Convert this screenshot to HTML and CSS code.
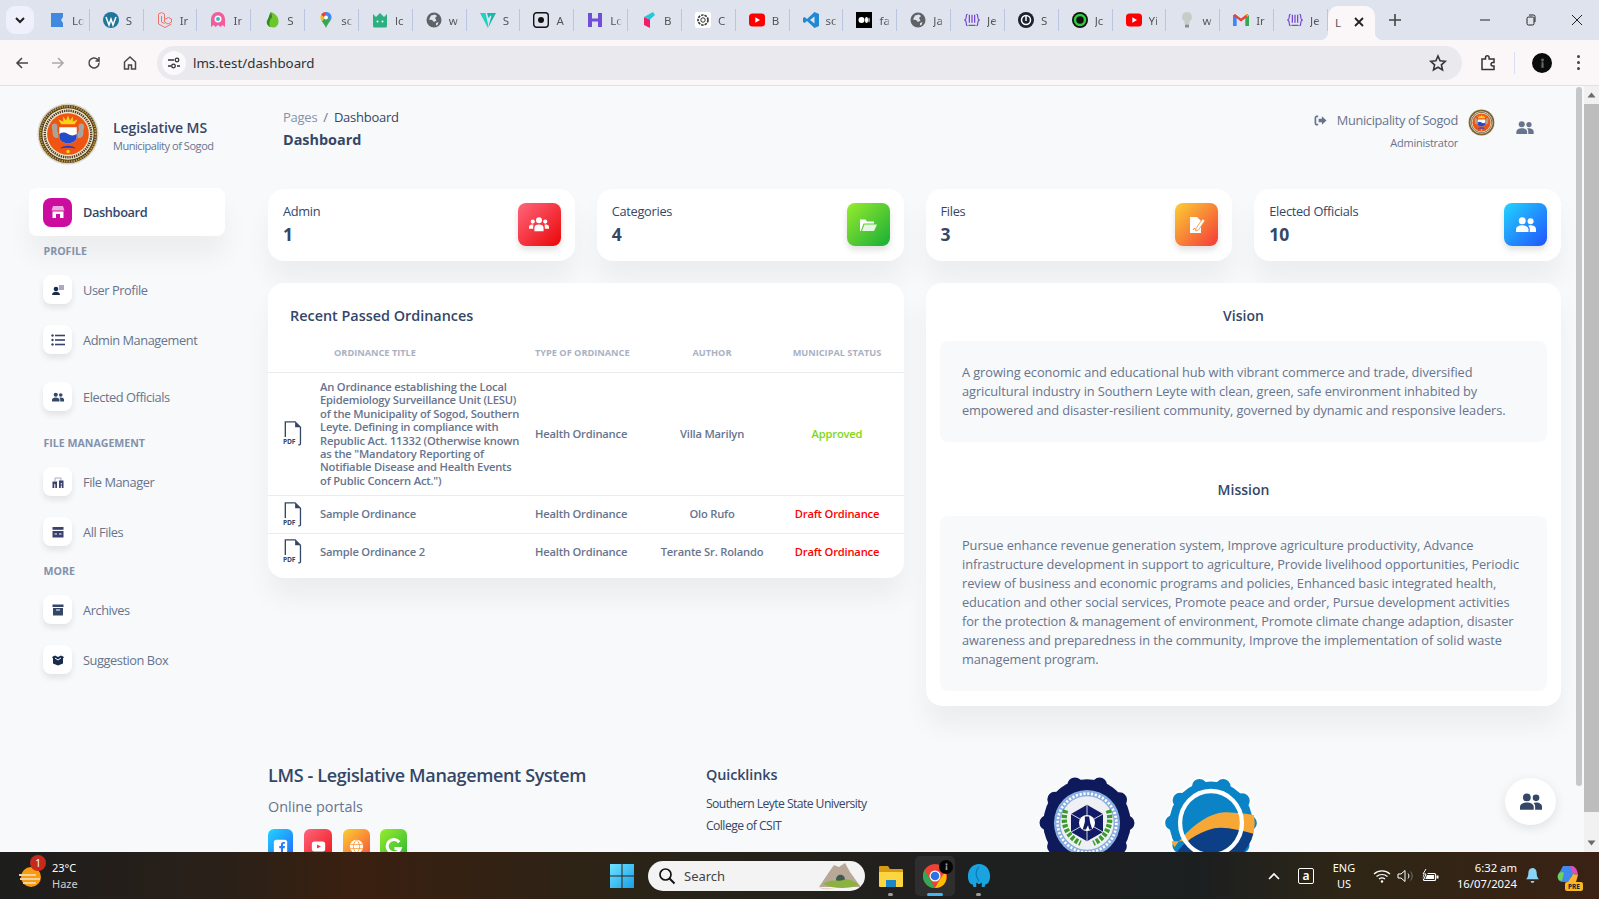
FILE: index.html
```html
<!DOCTYPE html>
<html lang="en">
<head>
<meta charset="utf-8">
<title>LMS Dashboard</title>
<link rel="stylesheet" href="styles.css">
</head>
<body>
<svg class="defs" aria-hidden="true">
  <defs><clipPath id="lgclip"><circle cx="45" cy="45" r="41"/></clipPath></defs>
  <symbol id="i-users3" viewBox="0 0 24 20"><circle cx="12" cy="5" r="3.6"/><circle cx="4.5" cy="6.5" r="2.5"/><circle cx="19.5" cy="6.5" r="2.5"/><path d="M6.5 18v-4c0-2.600 2-4 5.500-4s5.500 1.400 5.500 4v4z"/><path d="M0 15v-2c0-1.800 1.500-3 3.500-3 .8 0 1.300.1 1.900.4C5.200 11.200 5 12.500 5 14v1zM24 15v-2c0-1.800-1.500-3-3.500-3-.8 0-1.300.1-1.900.4.200.8.400 2.100.400 3.600v1z"/></symbol>
  <symbol id="i-users2" viewBox="0 0 24 18"><circle cx="7.500" cy="4.500" r="4.200"/><circle cx="17.500" cy="5" r="3.600"/><path d="M0 18v-3c0-3 3-5 7.500-5s7.500 2 7.500 5v3z"/><path d="M16.500 18v-3.500c0-1.700-.7-3-1.800-4 .9-.3 1.800-.5 2.900-.5 3.800 0 6.400 1.800 6.400 4.500V18z"/></symbol>
  <symbol id="i-seal" viewBox="0 0 64 64">
    <circle cx="32" cy="32" r="31.500" fill="#d9d5c5"/><circle cx="32" cy="32" r="30" fill="#4a3820"/>
    <circle cx="32" cy="32" r="28.500" fill="none" stroke="#c09a3c" stroke-width="2.200" stroke-dasharray="1.500 1"/>
    <circle cx="32" cy="32" r="26.500" fill="#f0e7c8"/>
    <circle cx="32" cy="32" r="24" fill="none" stroke="#4a3a28" stroke-width="2.500" stroke-dasharray="1.400 .9"/>
    <circle cx="32" cy="32" r="21.500" fill="#ef5412"/>
    <path d="M32 13l2 5 3-4 0 5 5-2-3 5h-14l-3-5 5 2 0-5 3 4z" fill="#f7d417"/>
    <path d="M23 25h18v10c0 4-4 6-9 7-5-1-9-3-9-7z" fill="#fff"/>
    <path d="M23 32c3-2 6-2 9 0s6 2 9 0v3c0 4-4 6-9 7-5-1-9-3-9-7z" fill="#2449c9"/>
    <path d="M24 47c2-4 14-4 16 0-3-1-13-1-16 0z" fill="#1a3fd0"/>
    <path d="M16 22c3-2 6 0 5 4-1 3 2 5 1 10-3 1-6-1-6-5 1-3-2-5 0-9zM48 22c-3-2-6 0-5 4 1 3-2 5-1 10 3 1 6-1 6-5-1-3 2-5 0-9z" fill="#a9a49b"/>
    <circle cx="32" cy="50" r="1.800" fill="#f7d417"/>
  </symbol>
  <symbol id="i-globe" viewBox="0 0 16 16"><circle cx="8" cy="8" r="7.500" fill="#5f6368"/><path d="M5 3.500l4-1 2 1.500-2 2 1.500 2.500L8 10 6 8 3 7.500zM10 11l2.500-1-1 3-1.500 .5z" fill="#dfe3ee"/></symbol>
  <symbol id="i-brack" viewBox="0 0 18 16"><path d="M4 1.500C2.500 1.500 2.500 3 2.500 4.500S2 7.500 .8 8c1.200.5 1.700 2 1.700 3.500s0 3 1.500 3M14 1.500c1.500 0 1.500 1.500 1.500 3s.5 3 1.700 3.500c-1.200.5-1.700 2-1.700 3.500s0 3-1.500 3" fill="none" stroke="#6d3bd2" stroke-width="1.200"/><path d="M6 2v9M9 2v9M12 2v9" stroke="#6d3bd2" stroke-width="1.300"/><path d="M5 14h8" stroke="#555" stroke-width="1.200"/></symbol>
  <symbol id="i-yt" viewBox="0 0 16 16"><rect y="1.500" width="16" height="13" rx="3.500" fill="#f00"/><path d="M6.300 5.200L11 8l-4.700 2.800z" fill="#fff"/></symbol>
  <symbol id="i-pdfdoc" viewBox="0 0 22 28"><path d="M3.500 18V1h11l6 6v18.500c0 .8-.5 1.300-1.300 1.300H18" fill="none" stroke="#344767" stroke-width="1.500"/><path d="M14.500 1v6h6" fill="#344767"/></symbol>
</svg>

<div class="tabstrip">
  <div class="tabsearch"><svg viewBox="0 0 12 12" class="ic12"><path d="M2 4l4 4 4-4" fill="none" stroke="#1f1f1f" stroke-width="2"/></svg></div>
  <div class="tabs">
    <div class="tab"><svg class="fav" viewBox="0 0 16 16"><path d="M2 1h12v4l-2 3 2 3v4H2z" fill="#3f8ae0"/></svg><span class="tt">Lo</span></div>
    <div class="tab"><svg class="fav" viewBox="0 0 16 16"><circle cx="8" cy="8" r="8" fill="#21759b"/><path d="M3 5l3 8 2-6 2 6 3-8" fill="none" stroke="#fff" stroke-width="1.500"/></svg><span class="tt">S</span></div>
    <div class="tab"><svg class="fav" viewBox="0 0 16 16"><path d="M1.500 2l3-1.500 3 1.500v8l3.500 2 3.500-2V7l-3-1.500L8 7M1.500 2v10L8 15.500l6.500-3.500M4.500 4v6l3 1.500" fill="none" stroke="#f0736a" stroke-width="1"/></svg><span class="tt">Ir</span></div>
    <div class="tab"><svg class="fav" viewBox="0 0 16 16"><path d="M1 15V7a7 7 0 0 1 14 0v8l-2.500-2-2 2-2.500-2-2.500 2-2-2z" fill="#f25c9b"/><circle cx="8" cy="7" r="3.500" fill="#fff"/><circle cx="8" cy="7" r="2" fill="#3bb6d6"/></svg><span class="tt">Ir</span></div>
    <div class="tab"><svg class="fav" viewBox="0 0 16 16"><path d="M7 0c3 1 8 4 7.500 10S9 16 6.500 15 1 11 3.500 8 5 3 7 0z" fill="#6cc72d"/><path d="M7 0c-2 3-2 5-3.500 8S4 14.500 6.500 15C4 12 6 8 7.500 6S7 2 7 0z" fill="#2e8b22"/></svg><span class="tt">S</span></div>
    <div class="tab"><svg class="fav" viewBox="0 0 16 16"><path d="M8 0c3 0 5.500 2.200 5.500 5.500 0 1-.3 1.800-.7 2.500L6 4.500 8 0z" fill="#4285f4"/><path d="M8 0a5.500 5.500 0 0 0-5 3l4 3z" fill="#ea4335"/><path d="M3 3c-.4.800-.5 1.600-.5 2.500 0 1.300.5 2.500 1.300 3.800L7 6z" fill="#fbbc04"/><path d="M3.800 9.300C5 11.300 7 13 8 16c1-3.200 3.400-5.500 4.800-8L9 5 7 6z" fill="#34a853"/><circle cx="8" cy="5.500" r="1.900" fill="#fff"/></svg><span class="tt">sc</span></div>
    <div class="tab"><svg class="fav" viewBox="0 0 16 16"><path d="M1 2l3 3 4-4 4 4 3-3v12a1.500 1.500 0 0 1-1.500 1.500h-11A1.500 1.500 0 0 1 1 14z" fill="#2bb07f"/><circle cx="5.500" cy="9.500" r="1" fill="#fff"/><circle cx="10.500" cy="9.500" r="1" fill="#fff"/></svg><span class="tt">lc</span></div>
    <div class="tab"><svg class="fav"><use href="#i-globe"/></svg><span class="tt">w</span></div>
    <div class="tab"><svg class="fav" viewBox="0 0 16 16"><path d="M0 1h5.500L8 12 8 16z" fill="#1fd1c0"/><path d="M16 1H7l1.500 5 2-2.500 1 .3L8 16z" fill="#15b8ab"/></svg><span class="tt">S</span></div>
    <div class="tab"><svg class="fav" viewBox="0 0 16 16"><rect x=".7" y=".7" width="14.600" height="14.600" rx="3" fill="#dfe3ee" stroke="#111" stroke-width="1.400"/><circle cx="8" cy="8" r="3" fill="#111"/></svg><span class="tt">A</span></div>
    <div class="tab"><svg class="fav" viewBox="0 0 16 16"><path d="M1 1h4v5.500h6V1h4v14h-4V9.500H5V15H1z" fill="#6f4fd8"/></svg><span class="tt">Lo</span></div>
    <div class="tab"><svg class="fav" viewBox="0 0 16 16"><path d="M3 5l6 2.500V16l-6-3z" fill="#f01d6b"/><path d="M3 5L12 0l2 3-5 4.500z" fill="#27c6d8"/></svg><span class="tt">B</span></div>
    <div class="tab"><svg class="fav" viewBox="0 0 16 16"><rect width="16" height="16" rx="2" fill="#fff"/><circle cx="8" cy="8" r="5" fill="none" stroke="#333" stroke-width="1.600" stroke-dasharray="2.500 1"/><circle cx="8" cy="8" r="2.200" fill="none" stroke="#333"/></svg><span class="tt">C</span></div>
    <div class="tab"><svg class="fav"><use href="#i-yt"/></svg><span class="tt">B</span></div>
    <div class="tab"><svg class="fav" viewBox="0 0 16 16"><path d="M11.500 0L16 2v12l-4.500 2L4 9l-2.500 2L0 10V6l1.500-1L4 7zM11.500 4.500L7 8l4.500 3.500z" fill="#1f8ad2"/></svg><span class="tt">sc</span></div>
    <div class="tab"><svg class="fav" viewBox="0 0 16 16"><rect width="16" height="16" fill="#000"/><circle cx="5.500" cy="8" r="3" fill="#fff"/><ellipse cx="10.500" cy="8" rx="1.500" ry="3" fill="#fff"/><ellipse cx="13" cy="8" rx=".6" ry="2.600" fill="#fff"/></svg><span class="tt">fa</span></div>
    <div class="tab"><svg class="fav"><use href="#i-globe"/></svg><span class="tt">Ja</span></div>
    <div class="tab"><svg class="fav"><use href="#i-brack"/></svg><span class="tt">Je</span></div>
    <div class="tab"><svg class="fav" viewBox="0 0 16 16"><circle cx="8" cy="8" r="8" fill="#1c2230"/><circle cx="8" cy="8" r="4.500" fill="none" stroke="#fff" stroke-width="1.500"/><path d="M8 4v5" stroke="#fff" stroke-width="1.500"/></svg><span class="tt">S</span></div>
    <div class="tab"><svg class="fav" viewBox="0 0 16 16"><circle cx="8" cy="8" r="8" fill="#111"/><circle cx="8" cy="8" r="5" fill="none" stroke="#2ecc40" stroke-width="2.500"/></svg><span class="tt">Jc</span></div>
    <div class="tab"><svg class="fav"><use href="#i-yt"/></svg><span class="tt">Yi</span></div>
    <div class="tab"><svg class="fav" viewBox="0 0 16 16"><path d="M8 0a5 5 0 0 1 2.500 9.300V12h-5V9.300A5 5 0 0 1 8 0z" fill="#c8ccc8"/><rect x="6" y="12.500" width="4" height="3" fill="#8a8f8a"/></svg><span class="tt">w</span></div>
    <div class="tab"><svg class="fav" viewBox="0 0 16 16"><path d="M0 14V3.500l2 -1 1.700 1V14z" fill="#4285f4"/><path d="M12.300 14V3.500l2-1 1.700 1V14z" fill="#34a853"/><path d="M0 3.500L8 9.500l8-6-2-1.500L8 6.500 2 2z" fill="#ea4335"/><path d="M13 2l3 1.500L14 5z" fill="#fbbc04"/></svg><span class="tt">Ir</span></div>
    <div class="tab"><svg class="fav"><use href="#i-brack"/></svg><span class="tt">Je</span></div>
  </div>
  <div class="tab-active"><span class="tt at">L</span><svg class="ic12" viewBox="0 0 12 12"><path d="M2 2l8 8M10 2l-8 8" stroke="#222" stroke-width="1.800"/></svg></div>
  <svg class="plus" viewBox="0 0 14 14"><path d="M7 1v12M1 7h12" stroke="#444" stroke-width="1.600"/></svg>
  <div class="winctl">
    <svg class="ic12" viewBox="0 0 12 12"><path d="M1 6h10" stroke="#222" stroke-width="1"/></svg>
    <svg class="ic12" viewBox="0 0 12 12"><rect x="2" y="3" width="7" height="8" rx="1.500" fill="none" stroke="#222"/><path d="M4 1h4.500A1.500 1.500 0 0 1 10 2.500V8" fill="none" stroke="#222"/></svg>
    <svg class="ic12" viewBox="0 0 12 12"><path d="M1 1l10 10M11 1L1 11" stroke="#222"/></svg>
  </div>
</div>

<div class="toolbar">
  <div class="navbtns">
    <svg class="tb" viewBox="0 0 16 16"><path d="M14 8H3M8 3L3 8l5 5" fill="none" stroke="#474747" stroke-width="1.600"/></svg>
    <svg class="tb" viewBox="0 0 16 16"><path d="M2 8h11M8 3l5 5-5 5" fill="none" stroke="#a9a9ab" stroke-width="1.600"/></svg>
    <svg class="tb" viewBox="0 0 16 16"><path d="M13 8a5 5 0 1 1-1.500-3.600L13 6V2M13 6H9.500" fill="none" stroke="#474747" stroke-width="1.500"/></svg>
    <svg class="tb" viewBox="0 0 16 16"><path d="M2.500 14V7L8 2l5.500 5v7h-4v-4h-3v4z" fill="none" stroke="#474747" stroke-width="1.500"/></svg>
  </div>
  <div class="omnibox">
    <span class="tune"><svg class="ic14" viewBox="0 0 14 14"><path d="M1 4h6M1 10h3M10 10h3" stroke="#333" stroke-width="1.400"/><circle cx="10" cy="4" r="1.800" fill="none" stroke="#333" stroke-width="1.300"/><circle cx="6.500" cy="10" r="1.800" fill="none" stroke="#333" stroke-width="1.300"/></svg></span>
    <span class="url">lms.test/dashboard</span>
    <svg class="star" viewBox="0 0 18 18"><path d="M9 2l2.100 4.800 5.200.5-3.900 3.500 1.100 5.100L9 13.200l-4.500 2.700 1.100-5.100L1.700 7.300l5.200-.5z" fill="none" stroke="#333" stroke-width="1.600"/></svg>
  </div>
  <div class="tbright">
    <svg class="tb" viewBox="0 0 18 18"><path d="M3 5h3.500V3.500a1.800 1.800 0 0 1 3.600 0V5H15v3.500h-1.200a1.700 1.700 0 0 0 0 3.500H15v3.500H3z" fill="none" stroke="#333" stroke-width="1.500"/></svg>
    <span class="tbdiv"></span>
    <span class="avatar"><svg viewBox="0 0 8 12" class="ava"><circle cx="4" cy="2.500" r="1.700" fill="#5a6670"/><path d="M3 4.500h2l.5 7h-3z" fill="#5a6670"/></svg></span>
    <span class="kebab"><i></i><i></i><i></i></span>
  </div>
</div>

<div class="page">
  <div class="content">
    <aside class="sidebar">
      <div class="brand">
        <svg class="seal"><use href="#i-seal"/></svg>
        <div class="brand-txt"><div class="brand-t">Legislative MS</div><div class="brand-s">Municipality of Sogod</div></div>
      </div>
      <div class="nav-active">
        <span class="nav-ic-a"><svg class="ic14" viewBox="0 0 14 14" fill="#fff"><path d="M2 1h10l1.500 4.500h-13z" opacity=".65"/><path d="M1.500 6.500h11V13H9V9H5v4H1.500z"/></svg></span>
        <span>Dashboard</span>
      </div>
      <div class="nav-label l-profile">PROFILE</div>
      <div class="nav-item ni-first"><span class="nav-ic"><svg class="ic14" viewBox="0 0 14 14"><circle cx="5" cy="6" r="2.300" fill="#172b4d"/><path d="M1 12c0-2.500 2-3.300 4-3.300s4 .8 4 3.300z" fill="#172b4d"/><rect x="8" y="2" width="5" height="5" fill="#a9a8c6"/></svg></span><span>User Profile</span></div>
      <div class="nav-item ni-gap8"><span class="nav-ic"><svg class="ic14" viewBox="0 0 14 14" fill="#3a416f"><circle cx="1.500" cy="2.500" r="1.200"/><circle cx="1.500" cy="7" r="1.200"/><circle cx="1.500" cy="11.500" r="1.200"/><rect x="4" y="1.700" width="10" height="1.600"/><rect x="4" y="6.200" width="10" height="1.600"/><rect x="4" y="10.700" width="10" height="1.600"/></svg></span><span>Admin Management</span></div>
      <div class="nav-item"><span class="nav-ic"><svg class="ic12" fill="#344767"><use href="#i-users2"/></svg></span><span>Elected Officials</span></div>
      <div class="nav-label l-file">FILE MANAGEMENT</div>
      <div class="nav-item ni-first"><span class="nav-ic"><svg class="ic14" viewBox="0 0 14 14"><path d="M4 6V3h6v3" fill="none" stroke="#a9a8c6"/><path d="M1.500 6.500H6V13H1.500zM8 5.500h4.500V13H8z" fill="#3a416f"/><path d="M3.300 9h1v4h-1zM9.800 8h1v1.500h-1zM9.800 10.500h1V13h-1z" fill="#fff"/></svg></span><span>File Manager</span></div>
      <div class="nav-item ni-tight"><span class="nav-ic"><svg class="ic14" viewBox="0 0 14 14"><rect x="1.500" y="2" width="11" height="2.800" fill="#3a416f"/><rect x="1.500" y="6" width="11" height="6.500" fill="#3a416f"/><path d="M3.500 9h2.500M8 9h2.500" stroke="#fff" stroke-width="1"/></svg></span><span>All Files</span></div>
      <div class="nav-label">MORE</div>
      <div class="nav-item ni-first"><span class="nav-ic"><svg class="ic14" viewBox="0 0 14 14"><rect x="1.500" y="1.500" width="11" height="2.500" fill="#344767"/><path d="M2 5h10v7.500H2z" fill="#344767"/><path d="M5 7h4" stroke="#fff"/></svg></span><span>Archives</span></div>
      <div class="nav-item"><span class="nav-ic"><svg class="ic14" viewBox="0 0 14 14"><path d="M1 4l3-1.500 3 1.500 3-1.500L13 4l-1 1.500v5L7 12.500l-5-2v-5z" fill="#172b4d"/><path d="M4 5l3 2 3-2" fill="none" stroke="#fff"/></svg></span><span>Suggestion Box</span></div>
    </aside>

    <main class="main">
      <header class="topbar">
        <div>
          <div class="crumbs"><span class="c-muted">Pages</span><span class="c-sep">/</span><span>Dashboard</span></div>
          <div class="page-title">Dashboard</div>
        </div>
        <div class="user">
          <div>
            <div class="user-row"><svg class="ic14" viewBox="0 0 14 14"><path d="M4.500 2.500H3a1.500 1.500 0 0 0-1.500 1.500v6A1.500 1.500 0 0 0 3 11.500h1.500" fill="none" stroke="#67748e" stroke-width="1.800"/><path d="M5 5.200h3.500V2.500L13.500 7l-5 4.500V8.800H5z" fill="#67748e"/></svg><span class="user-name">Municipality of Sogod</span></div>
            <div class="user-role">Administrator</div>
          </div>
          <svg class="seal-s"><use href="#i-seal"/></svg>
          <svg class="user-ic" fill="#67748e"><use href="#i-users2"/></svg>
        </div>
      </header>

      <section class="stats">
        <div class="stat"><div><div class="stat-l">Admin</div><div class="stat-n">1</div></div><span class="stat-ic g-red"><svg class="ic20" fill="#fff"><use href="#i-users3"/></svg></span></div>
        <div class="stat"><div><div class="stat-l">Categories</div><div class="stat-n">4</div></div><span class="stat-ic g-green"><svg class="ic18" viewBox="0 0 18 14"><path d="M1 13V1.500h5.500L8 3.500h7V5.500H4.500L1.800 13z" fill="#fff"/><path d="M3 13l2.500-6.500H18L15 13z" fill="#fff" opacity=".85"/></svg></span></div>
        <div class="stat"><div><div class="stat-l">Files</div><div class="stat-n">3</div></div><span class="stat-ic g-orange"><svg class="ic18" viewBox="0 0 18 18"><path d="M2 1h7l4 4v12H2z" fill="#fff"/><path d="M5 14l1.500-2 1 1.500 1-1" fill="none" stroke="#f98a34" stroke-width="1"/><path d="M8 12.500L14.500 3l2.500 1.600-6.500 9.400-2.800 1z" fill="#fff" stroke="#f98a34" stroke-width=".8"/></svg></span></div>
        <div class="stat"><div><div class="stat-l">Elected Officials</div><div class="stat-n">10</div></div><span class="stat-ic g-blue"><svg class="ic20" fill="#fff"><use href="#i-users2"/></svg></span></div>
      </section>

      <section class="cols">
        <div class="card tcard">
          <h6 class="card-h">Recent Passed Ordinances</h6>
          <table class="tbl">
            <colgroup><col class="c1"><col class="c2"><col class="c3"><col class="c4"></colgroup>
            <thead><tr><th class="th-title">ORDINANCE TITLE</th><th>TYPE OF ORDINANCE</th><th class="ctr">AUTHOR</th><th class="ctr">MUNICIPAL STATUS</th></tr></thead>
            <tbody>
              <tr class="r-long">
                <td><div class="ttl"><svg class="pdf" viewBox="0 0 22 28"><use href="#i-pdfdoc"/><text x="1" y="25.500" class="pdf-t">PDF</text></svg><span class="ttl-t">An Ordinance establishing the Local Epidemiology Surveillance Unit (LESU) of the Municipality of Sogod, Southern Leyte. Defining in compliance with Republic Act. 11332 (Otherwise known as the "Mandatory Reporting of Notifiable Disease and Health Events of Public Concern Act.")</span></div></td>
                <td>Health Ordinance</td><td class="ctr">Villa Marilyn</td><td class="ctr ok">Approved</td>
              </tr>
              <tr class="r-s r-mid">
                <td><div class="ttl"><svg class="pdf" viewBox="0 0 22 28"><use href="#i-pdfdoc"/><text x="1" y="25.500" class="pdf-t">PDF</text></svg><span class="ttl-t">Sample Ordinance</span></div></td>
                <td>Health Ordinance</td><td class="ctr">Olo Rufo</td><td class="ctr bad">Draft Ordinance</td>
              </tr>
              <tr class="r-s r-last">
                <td><div class="ttl"><svg class="pdf" viewBox="0 0 22 28"><use href="#i-pdfdoc"/><text x="1" y="25.500" class="pdf-t">PDF</text></svg><span class="ttl-t">Sample Ordinance 2</span></div></td>
                <td>Health Ordinance</td><td class="ctr">Terante Sr. Rolando</td><td class="ctr bad">Draft Ordinance</td>
              </tr>
            </tbody>
          </table>
        </div>
        <div class="card vcard">
          <h6 class="v-h">Vision</h6>
          <div class="vbox">A growing economic and educational hub with vibrant commerce and trade, diversified agricultural industry in Southern Leyte with clean, green, safe environment inhabited by empowered and disaster-resilient community, governed by dynamic and responsive leaders.</div>
          <h6 class="v-h v-h2">Mission</h6>
          <div class="vbox vbox-m">Pursue enhance revenue generation system, Improve agriculture productivity, Advance infrastructure development in support to agriculture, Provide livelihood opportunities, Periodic review of business and economic programs and policies, Enhanced basic integrated health, education and other social services, Promote peace and order, Pursue development activities for the protection &amp; management of environment, Promote climate change adaption, disaster awareness and preparedness in the community, Improve the implementation of solid waste management program.</div>
        </div>
      </section>

      <footer class="foot">
        <div class="foot-a">
          <div class="foot-t">LMS - Legislative Management System</div>
          <div class="foot-s">Online portals</div>
          <div class="soc">
            <span class="soc-i s1 g-blue"><svg class="ic18" viewBox="0 0 18 18"><rect x="1" y="1" width="16" height="16" rx="3" fill="#fff"/><path d="M12 17v-6h2l.3-2.500H12V7c0-.8.3-1.200 1.200-1.200h1.100V3.600C13.900 3.500 13.200 3.500 12.700 3.500c-2 0-3.200 1.200-3.200 3.300v1.700H7.500V11h2v6z" fill="#2b7cf6"/></svg></span>
            <span class="soc-i s2 g-red"><svg class="ic18" viewBox="0 0 18 18"><rect x="1" y="3" width="16" height="12" rx="3" fill="#fff"/><path d="M7.300 6.500L12 9l-4.700 2.500z" fill="#f5354a"/></svg></span>
            <span class="soc-i s3 g-orange"><svg class="ic18" viewBox="0 0 18 18"><circle cx="9" cy="9" r="8" fill="#fff"/><path d="M9 1c-5 5-5 11 0 16M9 1c5 5 5 11 0 16M1.500 6.500h15M1.500 11.500h15" fill="none" stroke="#fa9a33"/></svg></span>
            <span class="soc-i s4 g-green"><svg class="ic20" viewBox="0 0 20 20"><path d="M16 5.500A7 7 0 1 0 17 12h-6" fill="none" stroke="#fff" stroke-width="3.200"/></svg></span>
          </div>
        </div>
        <div class="foot-b">
          <div class="ql-t">Quicklinks</div>
          <div class="ql">Southern Leyte State University</div>
          <div class="ql">College of CSIT</div>
        </div>
        <svg class="lg lg1" viewBox="0 0 90 90">
          <circle cx="45" cy="45" r="41" fill="#0e1a5c"/>
          <circle cx="45" cy="45" r="37.500" fill="none" stroke="#0e1a5c" stroke-width="14" stroke-linecap="round" stroke-dasharray="0 23.560"/>
          <circle cx="45" cy="45" r="31" fill="#89aee0"/>
          <circle cx="45" cy="45" r="27.500" fill="none" stroke="#fff" stroke-width="2.500" stroke-dasharray="2 1.600"/>
          <circle cx="45" cy="45" r="25" fill="#eef0f3"/>
          <path d="M25 33c-4 12 1 25 14 31M65 33c4 12-1 25-14 31" fill="none" stroke="#3d9a2c" stroke-width="5" stroke-dasharray="3 1.500"/>
          <path d="M45 28l15 8.500v17L45 62l-15-8.500v-17z" fill="#121b66"/>
          <path d="M45 28v34M30 36.500l30 17M60 36.500l-30 17" stroke="#eef0f3" stroke-width=".8"/>
          <circle cx="45" cy="45" r="7.500" fill="#fff"/><path d="M43 39h4l1 6 2 6h-3l-1-4-2 4h-3l2-7z" fill="#121b66"/>
        </svg>
        <svg class="lg lg2" viewBox="0 0 90 90">
          <circle cx="45" cy="45" r="41" fill="#fff"/>
          <circle cx="45" cy="45" r="37" fill="none" stroke="#fff" stroke-width="16" stroke-linecap="round" stroke-dasharray="0 23.250"/>
          <circle cx="45" cy="45" r="39" fill="#0a83c7"/>
          <circle cx="45" cy="45" r="36" fill="none" stroke="#0a83c7" stroke-width="14" stroke-linecap="round" stroke-dasharray="0 22.620"/>
          <g clip-path="url(#lgclip)">
            <path d="M8 72C22 50 44 34 60 35c10 .5 18 1 28 3v24H8z" fill="#f6a735"/>
            <path d="M8 80c4-8 16-24 40-30 10-2 26 2 40 6v34H8z" fill="#0c3f86"/>
          </g>
          <ellipse cx="45" cy="45" rx="29" ry="30" fill="none" stroke="#fff" stroke-width="4"/>
        </svg>
      </footer>
      <button class="fab" type="button" aria-label="Users"><svg class="fab-ic" fill="#344767"><use href="#i-users2"/></svg></button>
    </main>
    <div class="inner-sb"><span></span></div>
  </div>
  <div class="outer-sb">
    <svg class="sb-a" viewBox="0 0 8 6"><path d="M4 .5L8 5.500H0z"/></svg>
    <div class="sb-track"><span></span></div>
    <svg class="sb-a" viewBox="0 0 8 6"><path d="M4 5.500L0 .5h8z"/></svg>
  </div>
</div>

<div class="taskbar">
  <div class="weather">
    <span class="w-ic"><svg class="w-svg" viewBox="0 0 24 24"><circle cx="12" cy="12" r="10" fill="#f79c10"/><path d="M0 10h17M1 14h20M4 18h13" stroke="#f0d2a2" stroke-width="2"/></svg><b class="w-badge">1</b></span>
    <div class="w-t"><div>23°C</div><div class="w-s">Haze</div></div>
  </div>
  <div class="tb-center">
    <svg class="win" viewBox="0 0 24 24"><defs><linearGradient id="gw" x1="0" y1="0" x2="1" y2="1"><stop offset="0" stop-color="#6fe3ff"/><stop offset="1" stop-color="#1a9ee8"/></linearGradient></defs><path d="M0 0h11.500v11.500H0zM12.500 0H24v11.500H12.500zM0 12.500h11.500V24H0zM12.500 12.500H24V24H12.500z" fill="url(#gw)"/></svg>
    <div class="search"><svg class="ic18" viewBox="0 0 18 18"><circle cx="7.500" cy="7.500" r="5.500" fill="none" stroke="#111" stroke-width="1.700"/><path d="M11.500 11.500l5 5" stroke="#111" stroke-width="1.900"/></svg><span>Search</span><svg class="s-art" viewBox="0 0 46 28"><path d="M2 25L12 10l5-7 5 2 6-4 5 9 5 7 6 8z" fill="#b8a898"/><path d="M19 18c0-7 9-7 9 0v4h-9z" fill="#3f5a50"/><path d="M6 22c8-6 16-2 20-4s10 0 16 5c-10 4-26 4-36-1z" fill="#8db13f"/><path d="M2 25c6 2 12 2 16 0-4 3-12 3-16 0z" fill="#d7b9a5"/></svg></div>
    <span class="app"><svg class="app-i" viewBox="0 0 24 24"><path d="M0 3a1 1 0 0 1 1-1h8l2 3h12a1 1 0 0 1 1 1v4H0z" fill="#d99a13"/><path d="M0 8h24v14a1 1 0 0 1-1 1H1a1 1 0 0 1-1-1z" fill="#fcd53f"/><path d="M7 16h10v7H7z" fill="#1b86c9"/></svg><i class="pip"></i></span>
    <span class="app app-on"><svg class="app-i" viewBox="0 0 24 24"><circle cx="12" cy="12" r="12" fill="#ea4335"/><path d="M12 24A12 12 0 0 1 1.600 6L7 15.500 12 24z" fill="#34a853"/><path d="M12 24l5.200-9 4.700-7c3.500 6 1 16-9.900 16z" fill="#fbbc04"/><circle cx="12" cy="12" r="5.500" fill="#fff"/><circle cx="12" cy="12" r="4.300" fill="#2a72e5"/></svg><span class="c-bdg"><svg viewBox="0 0 8 12" class="ava2"><circle cx="4" cy="2.500" r="1.700" fill="#8c969f"/><path d="M3 4.500h2l.5 7h-3z" fill="#8c969f"/></svg></span><i class="pip pip-on"></i></span>
    <span class="app"><svg class="app-i" viewBox="0 0 24 26"><path d="M12 0c7 0 12 6 12 13 0 5-2 9-5 9l-1 3h-3v-5l-3 2-3-2v5H6l-1-3c-3 0-5-4-5-9C0 6 5 0 12 0z" fill="#19a4e0"/><path d="M12 3c-3 3-4 7-2 12l2 4" fill="none" stroke="#0a78b8" stroke-width="1.200"/></svg><i class="pip"></i></span>
  </div>
  <div class="tray">
    <svg class="caret" viewBox="0 0 12 8"><path d="M1 7l5-5 5 5" fill="none" stroke="#fff" stroke-width="1.600"/></svg>
    <span class="abox">a</span>
    <div class="lang"><div>ENG</div><div>US</div></div>
    <svg class="ti wifi" viewBox="0 0 18 14"><path d="M1 5a12 12 0 0 1 16 0M3.500 7.500a8.500 8.500 0 0 1 11 0M6 10a5 5 0 0 1 6 0" fill="none" stroke="#fff" stroke-width="1.200"/><circle cx="9" cy="12.500" r="1.200" fill="#fff"/></svg>
    <svg class="ti vol" viewBox="0 0 18 14"><path d="M1 5h3l4-3.500v11L4 9H1z" fill="none" stroke="#fff"/><path d="M11 4.500c1.200 1.500 1.200 3.500 0 5" fill="none" stroke="#fff"/><path d="M13.500 2.500c2.200 2.600 2.200 6.400 0 9" fill="none" stroke="#777"/></svg>
    <svg class="ti batt" viewBox="0 0 18 14"><rect x="2.500" y="4.500" width="12" height="7" rx="1" fill="none" stroke="#fff" stroke-width="1.200"/><rect x="4" y="6" width="9" height="4" fill="#fff"/><rect x="15.500" y="6.500" width="2" height="3" fill="#fff"/><path d="M5 0L2 5h3l-2 5" fill="none" stroke="#222" stroke-width="2.500"/><path d="M5 0L2 5h3l-2 5" fill="none" stroke="#fff"/></svg>
    <div class="clock"><div>6:32 am</div><div>16/07/2024</div></div>
    <svg class="bell" viewBox="0 0 14 18"><path d="M7 1c3 0 4.500 2.500 4.500 5.500 0 3 1 5 2.500 6.500H0c1.500-1.500 2.500-3.500 2.500-6.500S4 1 7 1z" fill="#8ad4f6"/><path d="M5 15h4a2 2 0 0 1-4 0z" fill="#8ad4f6"/></svg>
    <span class="copilot"><svg class="cop" viewBox="0 0 24 24"><path d="M7 2h8c3 0 5 2 6 5l1 4c-3-2-6-1-7 2l-2 5H7C3 18 1 15 2 11z" fill="#3f88ee"/><path d="M2 11c1-3 4-4 6-2l-2 8c-3 0-5-3-4-6z" fill="#6fd05a"/><path d="M15 2c3 0 5 2 6 5l1 4-5-1-3-8z" fill="#e24bb0"/><path d="M17 10l5 1-2 7c-1 3-3 3-5 3l-3-3z" fill="#f9b233"/></svg><b class="pre">PRE</b></span>
  </div>
</div>
</body>
</html>
```

FILE: styles.css
```css
* { box-sizing: border-box; }
html, body { margin: 0; height: 899px; overflow: hidden; }
body { display: flex; flex-direction: column; font-family: "Open Sans", "Noto Sans", sans-serif; color: #344767; background: #f8f9fa; }
.defs { position: absolute; width: 0; height: 0; overflow: hidden; }
.ic12 { width: 12px; height: 12px; flex: none; }
.ic14 { width: 14px; height: 14px; flex: none; }
.ic18 { width: 18px; height: 18px; flex: none; }
.ic20 { width: 20px; height: 17px; flex: none; }

/* browser tabs */
.tabstrip { height: 40px; flex: none; background: #dfe3ee; display: flex; align-items: flex-start; }
.tabsearch { width: 28px; height: 28px; margin: 6px 2px 0 6px; border-radius: 9px; background: #eef1fb; display: flex; align-items: center; justify-content: center; }
.tabs { display: flex; height: 40px; }
.tab { width: 53.83px; height: 22px; margin-top: 9px; padding-left: 13px; display: flex; align-items: center; gap: 7px; border-right: 1px solid #b9c6e0; }
.fav { width: 16px; height: 16px; flex: none; }
.tt { font: 11.500px "Noto Sans", sans-serif; color: #555; white-space: nowrap; width: 12px; -webkit-mask-image: linear-gradient(90deg, #000 55%, transparent 100%); mask-image: linear-gradient(90deg, #000 55%, transparent 100%); }
.tab-active { position: relative; width: 47px; height: 34px; margin-top: 6px; background: #fbf7f9; border-radius: 10px 10px 0 0; display: flex; align-items: center; gap: 10px; padding-left: 7px; padding-bottom: 2px; }
.tab-active::before, .tab-active::after { content: ""; position: absolute; bottom: 0; width: 8px; height: 8px; }
.tab-active::before { left: -8px; background: radial-gradient(circle at 0 0, transparent 8px, #fbf7f9 8.500px); }
.tab-active::after { right: -8px; background: radial-gradient(circle at 100% 0, transparent 8px, #fbf7f9 8.500px); }
.at { width: 8px; -webkit-mask-image: none; mask-image: none; }
.plus { width: 14px; height: 14px; margin: 13px 0 0 13px; flex: none; }
.winctl { margin-left: auto; width: 104px; margin-right: 16px; margin-top: 14px; display: flex; justify-content: space-between; }

/* toolbar */
.toolbar { height: 46px; flex: none; background: #fbf7f9; border-bottom: 1px solid #e3e1e4; display: flex; align-items: center; padding-left: 14px; }
.navbtns { display: flex; gap: 20px; width: 143px; flex: none; }
.tb { width: 16px; height: 16px; flex: none; }
.omnibox { width: 1305px; height: 34px; border-radius: 17px; background: #e9e9ee; display: flex; align-items: center; padding-left: 5px; padding-right: 15px; flex: none; }
.tune { width: 24px; height: 24px; border-radius: 50%; background: #fbf9fb; display: flex; align-items: center; justify-content: center; flex: none; }
.url { font: 13.300px "Noto Sans", sans-serif; color: #303134; margin-left: 7px; }
.star { width: 18px; height: 18px; margin-left: auto; }
.tbright { display: flex; align-items: center; margin-left: 17px; }
.tbright .tb { width: 18px; height: 18px; }
.tbdiv { width: 1px; height: 22px; background: #d7dff0; margin: 0 17px 0 17px; }
.avatar { width: 20px; height: 20px; border-radius: 50%; background: #0b0b0b; display: flex; align-items: center; justify-content: center; }
.ava { width: 7px; height: 12px; }
.kebab { margin-left: 25px; display: flex; flex-direction: column; gap: 3px; }
.kebab i { width: 3px; height: 3px; border-radius: 50%; background: #444; display: block; }

/* page */
.page { flex: 1; min-height: 0; display: flex; overflow: hidden; background: #f8f9fa; }
.content { width: 1584px; display: flex; flex: none; overflow: hidden; }
.sidebar { width: 268px; flex: none; padding: 16px 0 0 29px; }
.brand { display: flex; align-items: center; gap: 14px; margin-left: 8px; height: 64px; }
.seal { width: 62px; height: 62px; flex: none; }
.brand-txt { padding-top: 4px; }
.brand-t { font-size: 14px; font-weight: 600; color: #344767; line-height: 20px; letter-spacing: -.1px; }
.brand-s { font-size: 11px; color: #67748e; line-height: 16px; letter-spacing: -.45px; }
.nav-active { width: 196px; height: 48px; margin-top: 22px; background: #fff; border-radius: 8px; box-shadow: 0 20px 27px rgba(0,0,0,.05); display: flex; align-items: center; gap: 11px; padding-left: 14px; font-size: 12.800px; font-weight: 600; letter-spacing: -.4px; color: #344767; }
.nav-ic-a { width: 29px; height: 29px; border-radius: 8px; background: #cb0c9f; display: flex; align-items: center; justify-content: center; }
.nav-label { font-size: 10.600px; font-weight: 700; color: #8392ab; margin-left: 14.500px; line-height: 16px; }
.l-profile { margin-top: 7px; }
.l-file { margin-top: 24px; }
.nav-item { display: flex; align-items: center; gap: 11px; margin: 0 0 21px 14px; height: 29px; font-size: 12.800px; letter-spacing: -.44px; color: #67748e; }
.ni-first { margin-top: 16px; }
.ni-gap8 { margin-bottom: 28px; }
.ni-tight { margin-bottom: 17px; }
.nav-ic { width: 29px; height: 29px; border-radius: 8px; background: #fff; box-shadow: 0 4px 6px rgba(0,0,0,.09); display: flex; align-items: center; justify-content: center; }
.nav-ic > .ic12 { width: 12px; height: 10px; }

.main { flex: 1; min-width: 0; padding-right: 15px; position: relative; }
.topbar { height: 103px; display: flex; justify-content: space-between; align-items: flex-start; padding-top: 22px; }
.crumbs { margin-left: 15px; font-size: 13px; letter-spacing: -.25px; line-height: 18px; color: #344767; display: flex; }
.c-muted { color: #8392ab; }
.c-sep { color: #6c757d; margin: 0 6px; }
.page-title { margin-left: 15px; margin-top: 4px; font-size: 14.400px; font-weight: 700; line-height: 20px; color: #344767; }
.user { display: flex; align-items: flex-start; padding-right: 27px; margin-top: 1px; }
.user-row { display: flex; align-items: center; gap: 10px; height: 24px; margin-top: -1px; }
.user-row .ic14 { width: 13px; height: 13px; margin-left: -2px; }
.user-name { font-size: 12.800px; letter-spacing: -.32px; color: #67748e; }
.user-role { font-size: 11px; letter-spacing: -.25px; color: #67748e; text-align: right; line-height: 14px; margin-top: 4px; }
.seal-s { width: 27px; height: 27px; margin: 0 0 0 10px; flex: none; }
.user-ic { width: 18px; height: 13px; margin: 12px 0 0 21px; flex: none; }

.stats { display: grid; grid-template-columns: repeat(4, 1fr); gap: 22px; }
.stat { height: 72px; background: #fff; border-radius: 16px; box-shadow: 0 20px 27px rgba(0,0,0,.05); display: flex; justify-content: space-between; align-items: center; padding: 0 14px 0 15px; }
.stat-l { font-size: 12.800px; font-weight: 400; letter-spacing: -.3px; color: #344767; line-height: 18px; margin-top: -2px; }
.stat-n { font-size: 17.500px; font-weight: 700; color: #344767; line-height: 24px; margin-top: 2px; }
.stat-ic { width: 43px; height: 43px; margin-top: -1px; border-radius: 8px; display: flex; align-items: center; justify-content: center; box-shadow: 0 4px 6px rgba(0,0,0,.12); }
.g-red { background: linear-gradient(135deg, #ff667c, #ea0606); }
.g-green { background: linear-gradient(135deg, #98ec2d, #17ad37); }
.g-orange { background: linear-gradient(135deg, #fbcf33, #f53939); }
.g-blue { background: linear-gradient(135deg, #21d4fd, #2152ff); }

.cols { display: grid; grid-template-columns: 636px 635px; gap: 22px; align-items: start; margin-top: 22px; }
.card { background: #fff; border-radius: 16px; box-shadow: 0 20px 27px rgba(0,0,0,.05); }
.tcard { height: 295px; overflow: hidden; }
.card-h { margin: 0; padding: 24px 0 0 22px; font-size: 14.400px; font-weight: 600; line-height: 18px; color: #344767; }
.tbl { width: 100%; border-collapse: collapse; table-layout: fixed; margin-top: 17px; font-size: 11.200px; color: #67748e; }
.c1 { width: 258px; } .c2 { width: 123px; } .c3 { width: 126px; } .c4 { width: 129px; }
.tbl th { height: 30px; padding: 0 0 8px 9px; text-align: left; font-size: 9.200px; font-weight: 700; color: #a9b2c3; border-bottom: 1px solid #e9ecef; white-space: nowrap; }
.tbl th.th-title { padding-left: 66px; }
.tbl th.ctr { text-align: center; padding-left: 0; }
.tbl th.ctr:last-child, .tbl td.ctr:last-child { padding-right: 5px; }
.tbl td { padding: 0 0 0 9px; font-weight: 600; letter-spacing: -.2px; border-bottom: 1px solid #e9ecef; vertical-align: middle; line-height: 13.430px; }
.tbl td.ctr { text-align: center; padding-left: 0; }
.r-long { height: 123px; }
.r-s { height: 37px; }
.r-mid { height: 38px; }
.r-last td { border-bottom: 0; }
.ttl { display: flex; align-items: center; gap: 18px; padding-left: 5px; }
.ttl-t { max-width: 202px; }
.pdf { width: 20px; height: 25px; flex: none; overflow: visible; }
.pdf-t { font-family: "Open Sans", sans-serif; font-size: 7.500px; font-weight: 700; fill: #344767; }
.ok { color: #82d616; }
.bad { color: #f00; }

.vcard { height: 423px; padding: 0 14px; }
.v-h { margin: 0; padding-top: 24px; font-size: 14px; font-weight: 600; line-height: 18px; text-align: center; color: #344767; }
.v-h2 { padding-top: 39px; }
.vbox { margin-top: 16px; padding: 21.500px 21px 22.500px 22px; background: #f8f9fa; border-radius: 8px; font-size: 12.800px; line-height: 19px; color: #67748e; letter-spacing: -.08px; }
.vbox-m { margin-top: 17px; padding-top: 19.500px; }

.foot { position: relative; margin-top: 44px; height: 200px; display: flex; }
.foot-a { width: 438px; flex: none; padding-top: 13px; }
.foot-t { font-size: 18px; font-weight: 600; line-height: 24px; color: #344767; letter-spacing: -.36px; }
.foot-s { font-size: 14.400px; color: #67748e; line-height: 20px; margin-top: 10px; }
.soc { display: flex; margin-top: 12px; }
.soc-i { height: 40px; border-radius: 6px; display: flex; align-items: center; justify-content: center; }
.s1 { width: 25px; margin-right: 11px; }
.s2 { width: 28px; margin-right: 11px; }
.s3 { width: 27px; margin-right: 10px; }
.s4 { width: 27px; }
.soc-i svg { width: 15px; height: 15px; margin-top: -6px; }
.soc-i .ic20 { width: 19px; height: 19px; margin-top: -5px; }
.foot-b { padding: 14px 0 0 0; width: 333px; flex: none; }
.ql-t { font-size: 14.400px; font-weight: 600; line-height: 22px; color: #344767; letter-spacing: -.1px; }
.ql { font-size: 12.200px; line-height: 22px; color: #344767; letter-spacing: -.57px; }
.ql-t + .ql { margin-top: 7px; }
.lg { width: 96px; height: 96px; flex: none; margin-top: 25px; }
.lg2 { margin-left: 28px; }
.fab { position: absolute; left: 1237px; top: 692px; width: 51px; height: 47px; border: 0; border-radius: 50%; background: #fff; box-shadow: 0 3px 12px rgba(0,0,0,.1); display: flex; align-items: center; justify-content: center; padding: 0; }
.fab-ic { width: 22px; height: 17px; }

.inner-sb { width: 8px; flex: none; padding: 1px 2px 0 0; }
.inner-sb span { display: block; width: 6px; height: 699px; background: #c6c7c8; border-radius: 4px; }
.outer-sb { width: 15px; flex: none; display: flex; flex-direction: column; background: #f1f1f1; }
.sb-a { width: 9px; height: 6px; margin: 6px auto; fill: #6b6b6b; flex: none; }
.sb-track { flex: 1; }
.sb-track span { display: block; height: 708px; background: #bdbdbd; }

/* windows taskbar */
.taskbar { height: 47px; flex: none; position: relative; display: flex; align-items: center; color: #fff; font-family: "Noto Sans", sans-serif; background: linear-gradient(90deg, #1d1d1d 0, #2a2018 14%, #3a2010 22%, #2a2417 40%, #1f1f1f 60%, #1c1f20 75%, #2e2616 84%, #3a2214 100%); }
.weather { display: flex; align-items: center; padding-left: 19px; width: 300px; flex: none; }
.w-ic { position: relative; width: 24px; height: 24px; margin-right: 9px; margin-top: 3px; }
.w-svg { width: 24px; height: 24px; display: block; }
.w-badge { position: absolute; left: 11px; top: -10px; width: 16px; height: 16px; border-radius: 50%; background: #c42b1c; font-size: 10px; font-weight: 400; line-height: 16px; text-align: center; }
.w-t { font-size: 11px; line-height: 16px; }
.w-s { color: #cfcfcf; }
.tb-center { position: absolute; left: 610px; top: 0; height: 47px; display: flex; align-items: center; }
.win { width: 24px; height: 24px; flex: none; }
.search { width: 217px; height: 30px; margin-left: 14px; border-radius: 15px; background: #f3f3f3; color: #444; display: flex; align-items: center; padding-left: 10px; font-size: 13px; gap: 8px; position: relative; }
.s-art { position: absolute; right: 2px; top: 1px; width: 46px; height: 28px; }
.app { width: 40px; height: 40px; margin-left: 4px; display: flex; align-items: center; justify-content: center; position: relative; border-radius: 5px; }
.search + .app { margin-left: 6px; }
.app-on { background: #2e2e2e; }
.app-i { width: 24px; height: 24px; }
.pip { position: absolute; bottom: 0; left: 17px; width: 5px; height: 3px; border-radius: 2px; background: #9b9b9b; }
.pip-on { left: 12px; width: 16px; background: #47b5f0; }
.c-bdg { position: absolute; right: 2px; top: 4px; width: 14px; height: 14px; border-radius: 50%; background: #050505; display: flex; align-items: center; justify-content: center; }
.ava2 { width: 5px; height: 9px; }
.tray { position: absolute; left: 1268px; top: 0; height: 47px; display: flex; align-items: center; }
.caret { width: 12px; height: 8px; flex: none; }
.abox { width: 16px; height: 16px; margin-left: 18px; border: 1px solid #fff; border-radius: 2px; font-size: 12px; font-weight: 600; line-height: 13px; text-align: center; }
.lang { width: 46px; margin-left: 7px; text-align: center; font-size: 11px; line-height: 16px; }
.ti { width: 18px; height: 14px; flex: none; }
.wifi { margin-left: 6px; }
.vol { margin-left: 6px; }
.batt { margin-left: 6px; }
.clock { width: 72px; margin-left: 6px; text-align: right; font-size: 11.300px; line-height: 16px; }
.bell { width: 13px; height: 17px; margin-left: 9px; flex: none; }
.copilot { position: relative; margin-left: 17px; width: 24px; height: 24px; }
.cop { width: 24px; height: 24px; display: block; }
.pre { position: absolute; right: -3px; bottom: -3px; width: 18px; height: 9px; border-radius: 2px; background: #f5b921; color: #222; font-size: 6.500px; font-weight: 700; line-height: 9px; text-align: center; }
```
